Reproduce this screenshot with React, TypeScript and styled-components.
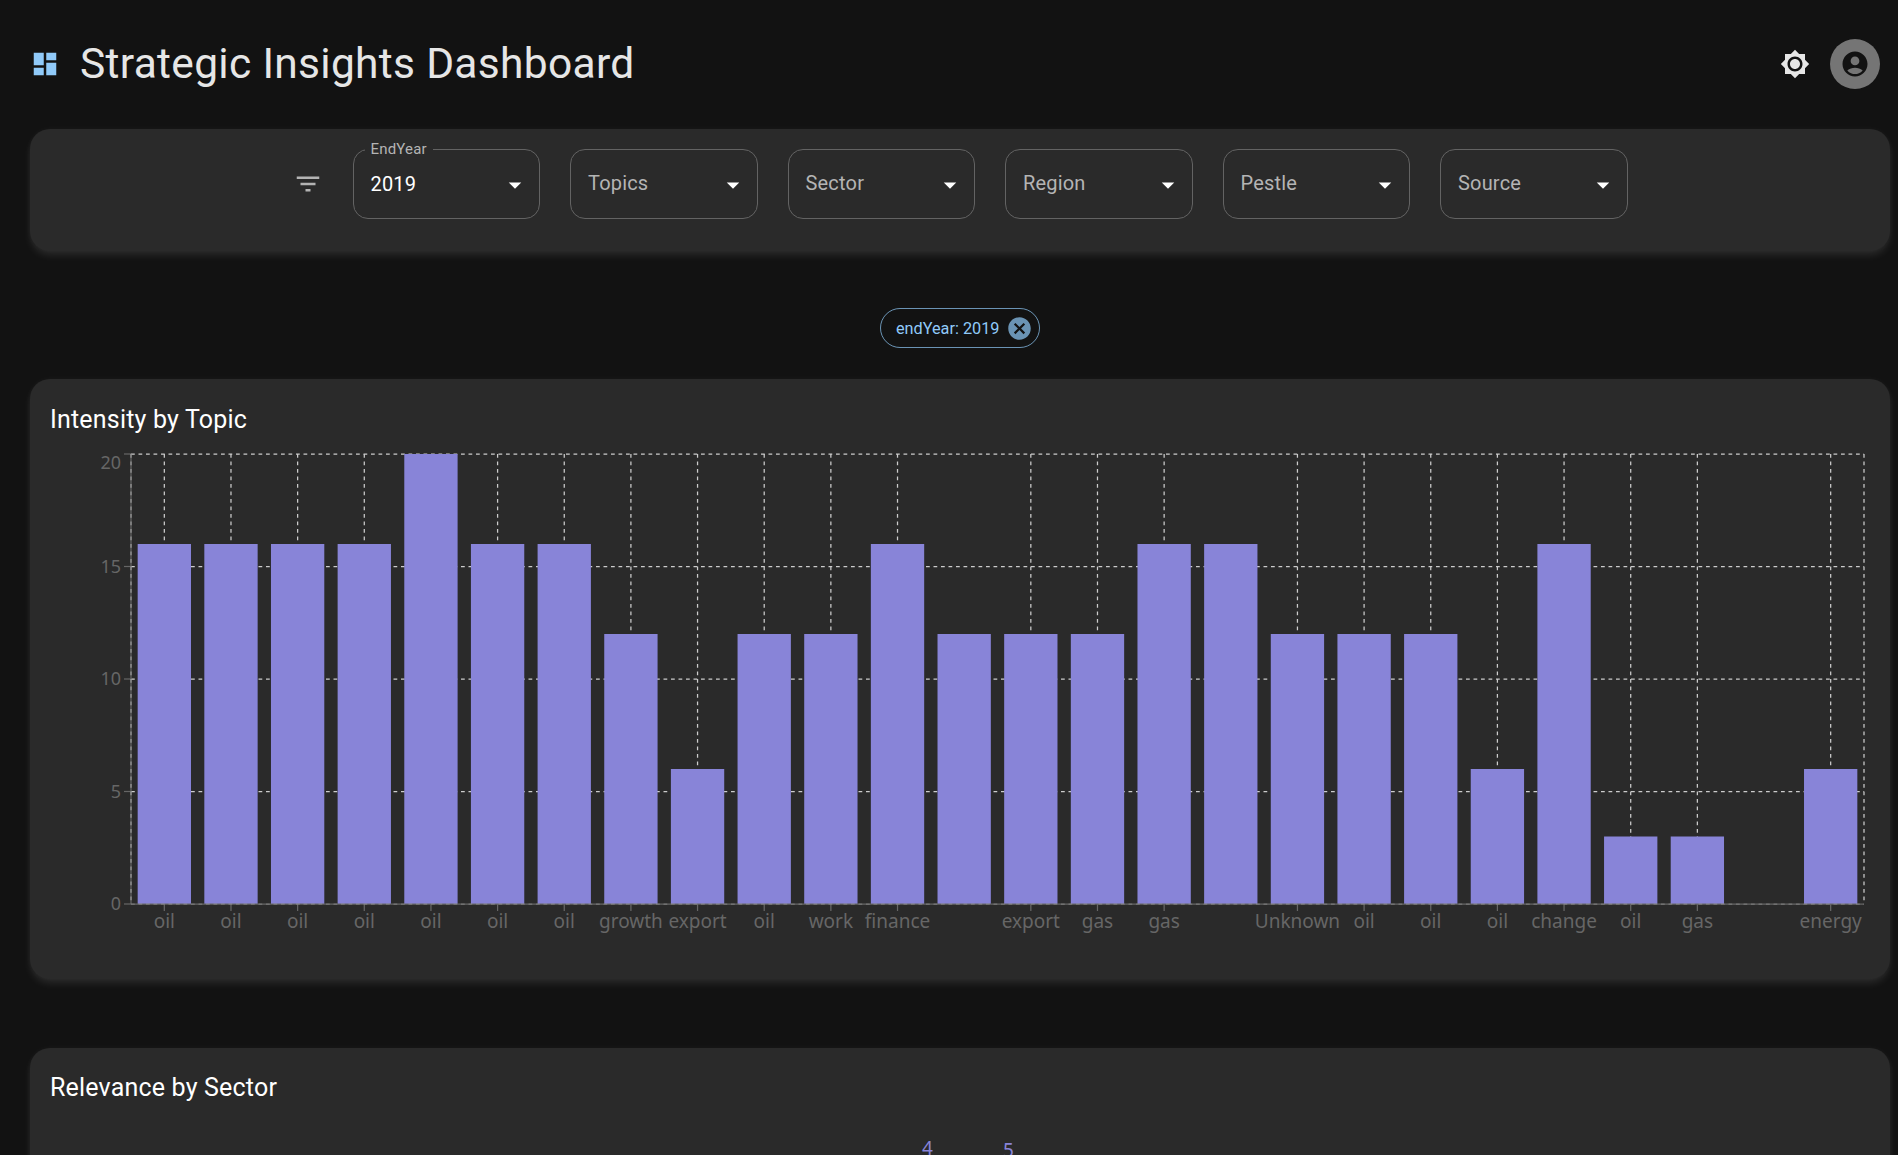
import { FC } from "react"
import styled, { createGlobalStyle } from "styled-components"

const GlobalStyle = createGlobalStyle`
  html, body {
    margin: 0;
    height: 100%;
    overflow: hidden;
    background: #121212;
  }
  body {
    font-family: Roboto, "Liberation Sans", sans-serif;
    color: #fff;
  }
`

const Page = styled.div`
  height: 1155px;
  overflow: hidden;
  padding: 0 8px 0 30px;
`

const Header = styled.header`
  height: 129px;
  display: flex;
  align-items: center;
  padding-bottom: 1px;
  box-sizing: border-box;
`

const Logo = styled.svg`
  width: 30px;
  height: 30px;
  fill: #90caf9;
`

const Title = styled.h1`
  margin: 0 0 2px 20px;
  flex: 1;
  font-size: 42.5px;
  line-height: 1.2;
  font-weight: 400;
  letter-spacing: 0.00735em;
  color: #e6e6e6;
`

const ThemeIcon = styled.svg`
  width: 30px;
  height: 30px;
  margin-right: 20px;
  fill: #e6e6e6;
`

const Avatar = styled.div`
  width: 50px;
  height: 50px;
  margin-right: 10px;
  border-radius: 50%;
  background: #757575;
  display: flex;
  align-items: center;
  justify-content: center;

  svg {
    width: 30px;
    height: 30px;
    fill: #121212;
  }
`

const Card = styled.section`
  background: #2a2a2a;
  border-radius: 20px;
  box-shadow: 0 5px 9px -1px rgba(255, 255, 255, 0.1), 0 0 6px 0 rgba(255, 255, 255, 0.04);
`

const FilterBar = styled(Card)`
  height: 122px;
  padding-top: 20px;
  box-sizing: border-box;
  display: flex;
  justify-content: center;
  align-items: flex-start;
  gap: 30px;
`

const FilterIcon = styled.svg`
  width: 30px;
  height: 30px;
  margin-top: 20px;
  fill: #b3b3b3;
`

const Select = styled.div`
  position: relative;
  width: 187.5px;
  height: 70px;
  box-sizing: border-box;
  padding: 0 17px;
  display: flex;
  align-items: center;
  border: 1px solid #636363;
  border-radius: 15px;
  font-size: 20px;
  letter-spacing: 0.00938em;
  color: #b4b4b4;
`

const SelectValue = styled.span`
  color: #fff;
`

const Placeholder = styled.span`
  margin-bottom: 2px;
`

const FloatingLabel = styled.span`
  position: absolute;
  left: 11px;
  top: -10px;
  padding: 0 6px;
  background: #2a2a2a;
  font-size: 15px;
  line-height: 18px;
  color: #b4b4b4;
`

const Caret = styled.svg`
  position: absolute;
  right: 9px;
  top: 20px;
  width: 30px;
  height: 30px;
  fill: #fff;
`

const ChipRow = styled.div`
  height: 128px;
  padding-top: 57px;
  box-sizing: border-box;
  display: flex;
  justify-content: center;
`

const Chip = styled.div`
  width: 160px;
  height: 40px;
  box-sizing: border-box;
  padding: 0 6px 0 15px;
  display: flex;
  align-items: center;
  justify-content: space-between;
  border: 1px solid rgba(144, 202, 249, 0.7);
  border-radius: 20px;
  font-size: 16.25px;
  color: #90caf9;

  svg {
    width: 27px;
    height: 27px;
    fill: rgba(144, 202, 249, 0.7);
  }
`

const ChartCard = styled(Card)`
  height: 600px;
  padding: 21px 20px 0;
  box-sizing: border-box;
  margin-bottom: 69px;
`

const SectionCard = styled(Card)`
  height: 600px;
  padding: 20px 20px 0;
  box-sizing: border-box;
  position: relative;
`

const CardTitle = styled.h2`
  margin: 0;
  font-size: 25px;
  line-height: 1.6;
  font-weight: 400;
  letter-spacing: 0.0075em;
  color: #fff;
`

const ChartSvg = styled.svg`
  display: block;
  overflow: visible;
  font-family: "Noto Sans", sans-serif;
`

const PieLabel = styled.span<{ $x: number; $y: number }>`
  position: absolute;
  left: ${(p) => p.$x}px;
  top: ${(p) => p.$y}px;
  font-family: "Noto Sans", sans-serif;
  font-size: 19px;
  line-height: 20px;
  color: #8884d8;
`

const bars: [string, number][] = [
  ["oil", 16], ["oil", 16], ["oil", 16], ["oil", 16], ["oil", 20], ["oil", 16], ["oil", 16],
  ["growth", 12], ["export", 6], ["oil", 12], ["work", 12], ["finance", 16], ["", 12],
  ["export", 12], ["gas", 12], ["gas", 16], ["", 16], ["Unknown", 12], ["oil", 12], ["oil", 12],
  ["oil", 6], ["change", 16], ["oil", 3], ["gas", 3], ["", 0], ["energy", 6],
]

const filters = ["Topics", "Sector", "Region", "Pestle", "Source"]

// plot area in page pixels, and where the svg starts on the page
const PLOT = { left: 131, right: 1864, top: 454, bottom: 904 }
const ORIGIN = { x: 50, y: 440 }

const x0 = PLOT.left - ORIGIN.x
const x1 = PLOT.right - ORIGIN.x
const y0 = PLOT.top - ORIGIN.y
const y1 = PLOT.bottom - ORIGIN.y
const band = (x1 - x0) / bars.length
const yOf = (v: number) => y1 - ((y1 - y0) * v) / 20

const BarChart: FC = () => (
  <ChartSvg width={1820} height={520}>
    <g stroke="#ccc" strokeWidth={1.25} strokeDasharray="3.75 3.75" fill="none">
      {[5, 10, 15, 20].map((v) => (
        <line key={v} x1={x0} x2={x1} y1={yOf(v)} y2={yOf(v)} />
      ))}
      {bars.map(([name], i) =>
        name ? <line key={i} x1={x0 + band * (i + 0.5)} x2={x0 + band * (i + 0.5)} y1={y0} y2={y1} /> : null
      )}
      <line x1={x1} x2={x1} y1={y0} y2={y1} />
    </g>
    {bars.map(([, v], i) => (
      <rect
        key={i}
        x={x0 + band * i + band * 0.1}
        y={yOf(v)}
        width={band * 0.8}
        height={y1 - yOf(v)}
        fill="#8884d8"
      />
    ))}
    <g stroke="#666" strokeWidth={1.25} fill="none">
      <line x1={x0} x2={x0} y1={y0} y2={y1} />
      <line x1={x0} x2={x1} y1={y1} y2={y1} />
      {[0, 5, 10, 15, 20].map((v) => (
        <line key={v} x1={x0 - 7} x2={x0} y1={yOf(v)} y2={yOf(v)} />
      ))}
      {bars.map(([name], i) =>
        name ? <line key={i} x1={x0 + band * (i + 0.5)} x2={x0 + band * (i + 0.5)} y1={y1} y2={y1 + 7} /> : null
      )}
    </g>
    <g stroke="#ccc" strokeWidth={1.25} strokeDasharray="3.75 3.75" fill="none">
      <line x1={x0} x2={x0} y1={y0} y2={y1} opacity={0.6} />
      <line x1={x0} x2={x1} y1={y1} y2={y1} opacity={0.3} />
    </g>
    <g fill="#666" fontSize="18">
      {[0, 5, 10, 15, 20].map((v) => (
        <text key={v} x={x0 - 10} y={v === 20 ? yOf(v) + 15 : yOf(v) + 6} textAnchor="end">
          {v}
        </text>
      ))}
    </g>
    <g fill="#666" fontSize="19">
      {bars.map(([name], i) => (
        <text key={i} x={x0 + band * (i + 0.5)} y={y1 + 24} textAnchor="middle">
          {name}
        </text>
      ))}
    </g>
  </ChartSvg>
)

const App: FC = () => (
  <>
    <GlobalStyle />
    <Page>
      <Header>
        <Logo viewBox="0 0 24 24">
          <path d="M3 13h8V3H3v10zm0 8h8v-6H3v6zm10 0h8V11h-8v10zm0-18v6h8V3h-8z" />
        </Logo>
        <Title>Strategic Insights Dashboard</Title>
        <ThemeIcon viewBox="0 0 24 24">
          <path d="M20 8.69V4h-4.69L12 .69 8.69 4H4v4.69L.69 12 4 15.31V20h4.69L12 23.31 15.31 20H20v-4.69L23.31 12 20 8.69zM12 18c-3.31 0-6-2.69-6-6s2.69-6 6-6 6 2.69 6 6-2.69 6-6 6zm0-10c-2.21 0-4 1.79-4 4s1.79 4 4 4 4-1.79 4-4-1.79-4-4-4z" />
        </ThemeIcon>
        <Avatar>
          <svg viewBox="0 0 24 24">
            <path d="M12 2C6.48 2 2 6.48 2 12s4.48 10 10 10 10-4.48 10-10S17.52 2 12 2zm0 4c1.93 0 3.5 1.57 3.5 3.5S13.93 13 12 13s-3.5-1.57-3.5-3.5S10.07 6 12 6zm0 14c-2.03 0-4.43-.82-6.14-2.88C7.55 15.8 9.68 15 12 15s4.45.8 6.14 2.12C16.43 19.18 14.03 20 12 20z" />
          </svg>
        </Avatar>
      </Header>

      <FilterBar>
        <FilterIcon viewBox="0 0 24 24">
          <path d="M10 18h4v-2h-4v2zM3 6v2h18V6H3zm3 7h12v-2H6v2z" />
        </FilterIcon>
        <Select>
          <FloatingLabel>EndYear</FloatingLabel>
          <SelectValue>2019</SelectValue>
          <Caret viewBox="0 0 24 24">
            <path d="M7 10l5 5 5-5z" />
          </Caret>
        </Select>
        {filters.map((f) => (
          <Select key={f}>
            <Placeholder>{f}</Placeholder>
            <Caret viewBox="0 0 24 24">
              <path d="M7 10l5 5 5-5z" />
            </Caret>
          </Select>
        ))}
      </FilterBar>

      <ChipRow>
        <Chip>
          endYear: 2019
          <svg viewBox="0 0 24 24">
            <path d="M12 2C6.47 2 2 6.47 2 12s4.47 10 10 10 10-4.47 10-10S17.53 2 12 2zm5 13.59L15.59 17 12 13.41 8.41 17 7 15.59 10.59 12 7 8.41 8.41 7 12 10.59 15.59 7 17 8.41 13.41 12 17 15.59z" />
          </svg>
        </Chip>
      </ChipRow>

      <ChartCard>
        <CardTitle>Intensity by Topic</CardTitle>
        <BarChart />
      </ChartCard>

      <SectionCard>
        <CardTitle>Relevance by Sector</CardTitle>
        <PieLabel $x={892} $y={90}>4</PieLabel>
        <PieLabel $x={973} $y={92}>5</PieLabel>
      </SectionCard>
    </Page>
  </>
)

export default App
